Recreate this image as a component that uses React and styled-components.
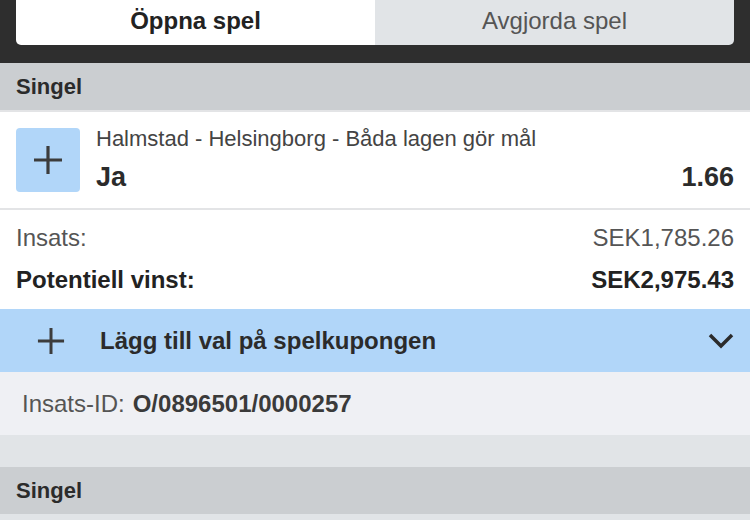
import React from "react"
import styled, { createGlobalStyle } from "styled-components"

const GlobalStyle = createGlobalStyle`
  body {
    margin: 0;
    background: #ffffff;
    font-family: "Liberation Sans", Arial, sans-serif;
  }
`

const Page = styled.div`
  width: 750px;
  height: 520px;
  overflow: hidden;
  background: #e1e4e7;
`

const TopBar = styled.div`
  background: #2e2e2e;
  height: 63px;
  padding: 0 16px;
  box-sizing: border-box;
`

const Tabs = styled.div`
  display: grid;
  grid-template-columns: 1fr 1fr;
  height: 45px;
  border-radius: 0 0 5px 5px;
  overflow: hidden;
`

const Tab = styled.div`
  display: flex;
  align-items: center;
  justify-content: center;
  font-size: 24px;
  background: ${p => (p.active ? "#ffffff" : "#e1e4e7")};
  color: ${p => (p.active ? "#222" : "#555")};
  font-weight: ${p => (p.active ? "bold" : "normal")};
  padding-bottom: 4px;
`

const SectionHeader = styled.div`
  height: 47px;
  background: #cbced1;
  display: flex;
  align-items: center;
  padding: 0 16px;
  font-size: 22px;
  font-weight: bold;
  color: #2b2b2b;
`

const Selection = styled.div`
  background: #fff;
  border-top: 2px solid #e3e4e6;
  border-bottom: 2px solid #e3e4e6;
  height: 96px;
  display: flex;
  align-items: center;
  padding: 0 16px;
  gap: 16px;
`

const IconBox = styled.div`
  width: 64px;
  height: 64px;
  border-radius: 4px;
  background: #b1d6f9;
  display: flex;
  align-items: center;
  justify-content: center;
  flex-shrink: 0;
`

const SelectionText = styled.div`
  flex: 1;
  display: flex;
  flex-direction: column;
  gap: 11px;
  margin-top: -2px;
`

const Market = styled.div`
  font-size: 22px;
  line-height: 25px;
  color: #444;
`

const OutcomeRow = styled.div`
  display: flex;
  justify-content: space-between;
  font-size: 27px;
  line-height: 31px;
  font-weight: bold;
  color: #2b2b2b;
`

const Summary = styled.div`
  background: #fff;
  padding: 14px 16px 15px;
  display: flex;
  flex-direction: column;
  gap: 14px;
`

const SummaryRow = styled.div`
  display: flex;
  justify-content: space-between;
  font-size: 24px;
  line-height: 28px;
  font-weight: ${p => (p.strong ? "bold" : "normal")};
  color: ${p => (p.strong ? "#222" : "#555")};
`

const AddBar = styled.div`
  height: 63px;
  background: #b1d6f9;
  display: flex;
  align-items: center;
  padding: 0 16px 0 37px;
  gap: 35px;
  font-size: 24px;
  font-weight: bold;
  color: #2b2b2b;
`

const AddLabel = styled.div`
  flex: 1;
`

const BetId = styled.div`
  height: 63px;
  background: #eff0f4;
  display: flex;
  align-items: center;
  padding: 0 22px;
  font-size: 24px;
  color: #555;
  b {
    color: #3a3a3a;
    margin-left: 8px;
  }
`

const Spacer = styled.div`
  height: 32px;
  background: #e1e4e7;
`

const Plus = ({ size = 30 }) => (
  <svg width={size} height={size} viewBox="0 0 30 30">
    <path d="M15 1v28M1 15h28" stroke="#3c3c3c" strokeWidth="3.2" fill="none" />
  </svg>
)

const Chevron = () => (
  <svg width="26" height="16" viewBox="0 0 26 16">
    <path d="M2 2l11 11L24 2" stroke="#2b2b2b" strokeWidth="3.5" fill="none" />
  </svg>
)

export default function App() {
  return (
    <>
      <GlobalStyle />
      <Page>
        <TopBar>
          <Tabs>
            <Tab active>Öppna spel</Tab>
            <Tab>Avgjorda spel</Tab>
          </Tabs>
        </TopBar>
        <SectionHeader>Singel</SectionHeader>
        <Selection>
          <IconBox>
            <Plus />
          </IconBox>
          <SelectionText>
            <Market>Halmstad - Helsingborg - Båda lagen gör mål</Market>
            <OutcomeRow>
              <span>Ja</span>
              <span>1.66</span>
            </OutcomeRow>
          </SelectionText>
        </Selection>
        <Summary>
          <SummaryRow>
            <span>Insats:</span>
            <span>SEK1,785.26</span>
          </SummaryRow>
          <SummaryRow strong>
            <span>Potentiell vinst:</span>
            <span>SEK2,975.43</span>
          </SummaryRow>
        </Summary>
        <AddBar>
          <Plus size={28} />
          <AddLabel>Lägg till val på spelkupongen</AddLabel>
          <Chevron />
        </AddBar>
        <BetId>
          Insats-ID:<b>O/0896501/0000257</b>
        </BetId>
        <Spacer />
        <SectionHeader>Singel</SectionHeader>
      </Page>
    </>
  )
}
